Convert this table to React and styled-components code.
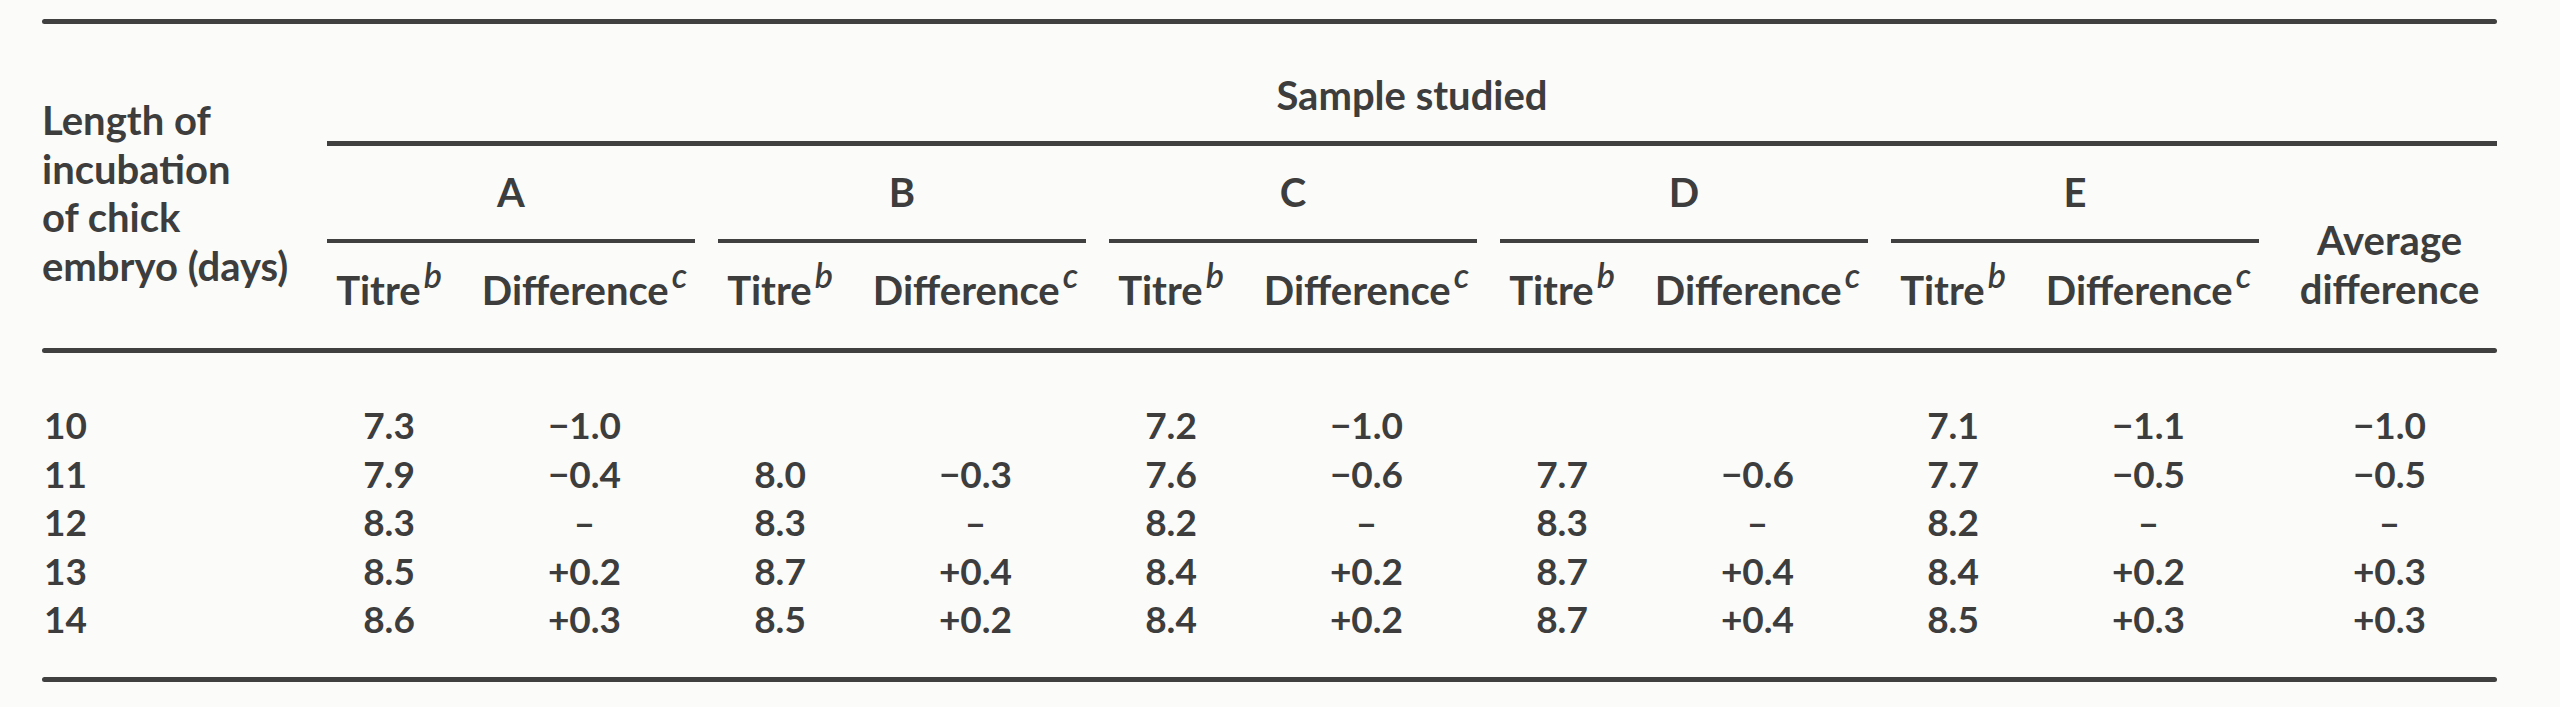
import React from "react";
import styled, { createGlobalStyle } from "styled-components";

const GlobalStyle = createGlobalStyle`
  html, body {
    margin: 0;
    padding: 0;
    background: #fbfbf9;
  }
  body {
    font-family: "Lato", "Liberation Sans", Arial, sans-serif;
    font-weight: 700;
    color: #3d3d3d;
  }
`;

// stub | 5 x (titre, difference) | average
const COLUMNS = "285px repeat(5, 124px 267px) 215px";

const groups = ["A", "B", "C", "D", "E"];

const rows = [
  { days: "10", cells: [["7.3", "−1.0"], null, ["7.2", "−1.0"], null, ["7.1", "−1.1"]], avg: "−1.0" },
  { days: "11", cells: [["7.9", "−0.4"], ["8.0", "−0.3"], ["7.6", "−0.6"], ["7.7", "−0.6"], ["7.7", "−0.5"]], avg: "−0.5" },
  { days: "12", cells: [["8.3", "–"], ["8.3", "–"], ["8.2", "–"], ["8.3", "–"], ["8.2", "–"]], avg: "–" },
  { days: "13", cells: [["8.5", "+0.2"], ["8.7", "+0.4"], ["8.4", "+0.2"], ["8.7", "+0.4"], ["8.4", "+0.2"]], avg: "+0.3" },
  { days: "14", cells: [["8.6", "+0.3"], ["8.5", "+0.2"], ["8.4", "+0.2"], ["8.7", "+0.4"], ["8.5", "+0.3"]], avg: "+0.3" },
];

export default function App() {
  return (
    <>
      <GlobalStyle />
      <Page>
        <Rule />

        <Head>
          <Stub>
            Length of
            <br />
            incubation
            <br />
            of chick
            <br />
            embryo (days)
          </Stub>

          <Spanner>Sample studied</Spanner>

          {groups.map((g) => (
            <GroupHead key={g}>{g}</GroupHead>
          ))}

          <AvgHead>
            Average
            <br />
            difference
          </AvgHead>

          {groups.map((g) => (
            <React.Fragment key={g}>
              <SubHead>
                Titre<Sup>b</Sup>
              </SubHead>
              <SubHead>
                Difference<Sup>c</Sup>
              </SubHead>
            </React.Fragment>
          ))}
        </Head>

        <Rule />

        <Body>
          {rows.map((r) => (
            <React.Fragment key={r.days}>
              <DayCell>{r.days}</DayCell>
              {r.cells.map((c, i) => (
                <React.Fragment key={i}>
                  <Cell>{c ? c[0] : ""}</Cell>
                  <Cell>{c ? c[1] : ""}</Cell>
                </React.Fragment>
              ))}
              <Cell>{r.avg}</Cell>
            </React.Fragment>
          ))}
        </Body>

        <Rule />
      </Page>
    </>
  );
}

const Page = styled.div`
  width: 2455px;
  padding: 19px 0 0 42px;
`;

const Rule = styled.div`
  height: 5px;
  background: #404040;
  border-radius: 3px;
`;

const Head = styled.div`
  display: grid;
  grid-template-columns: ${COLUMNS};
  font-size: 40px;
  line-height: 48px;
`;

const Stub = styled.div`
  grid-column: 1;
  grid-row: 1 / span 3;
  padding-top: 72px;
  line-height: 48.7px;
  white-space: nowrap;
`;

const Spanner = styled.div`
  grid-column: 2 / -1;
  grid-row: 1;
  text-align: center;
  padding: 47px 0 22px;
  border-bottom: 5px solid #404040;
`;

const GroupHead = styled.div`
  grid-row: 2;
  grid-column: span 2;
  margin-right: 23px;
  text-align: center;
  padding: 22px 0 23px;
  border-bottom: 4px solid #404040;
`;

const AvgHead = styled.div`
  grid-column: 12;
  grid-row: 2 / span 2;
  align-self: end;
  text-align: center;
  line-height: 49px;
  padding-bottom: 34px;
`;

const SubHead = styled.div`
  grid-row: 3;
  text-align: center;
  white-space: nowrap;
  padding: 23px 0 34px;
`;

const Sup = styled.span`
  font-style: italic;
  font-weight: 600;
  font-size: 34px;
  line-height: 0;
  vertical-align: 17px;
  margin-left: 3px;
`;

const Body = styled.div`
  display: grid;
  grid-template-columns: ${COLUMNS};
  grid-auto-rows: 48.5px;
  font-size: 37px;
  line-height: 48.5px;
  padding: 48px 0 33px;
`;

const Cell = styled.div`
  text-align: center;
  white-space: nowrap;
`;

const DayCell = styled(Cell)`
  text-align: left;
  padding-left: 2px;
`;
